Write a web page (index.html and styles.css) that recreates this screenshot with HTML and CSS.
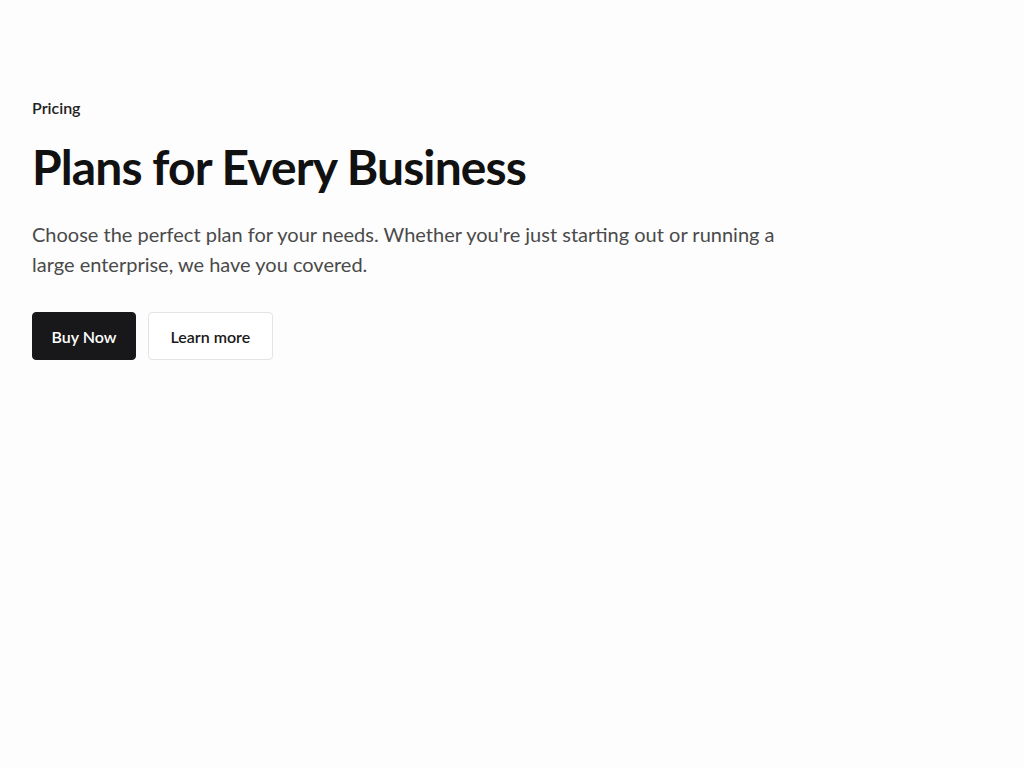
FILE: index.html
```html
<!DOCTYPE html>
<html lang="en">
<head>
    <meta charset="UTF-8">
    <meta name="viewport" content="width=device-width, initial-scale=1.0">
    <title>Pricing</title>
    <link rel="stylesheet" href="styles.css">
</head>
<body>

    <section class="hero">
        <p class="eyebrow">Pricing</p>
        <h1 class="title">Plans for Every Business</h1>
        <p class="lead">Choose the perfect plan for your needs. Whether you're just starting out or running a large enterprise, we have you covered.</p>
        <div class="actions">
            <button class="btn btn-dark">Buy Now</button>
            <button class="btn btn-light">Learn more</button>
        </div>
    </section>

</body>
</html>
```

FILE: styles.css
```css
body {
    margin: 0;
    background-color: #fdfdfd;
    color: #111111;
    font-family: Lato, "Noto Sans", sans-serif;
}
.hero {
    padding: 96px 32px;
}
.eyebrow {
    margin: 0;
    font-size: 16px;
    line-height: 24px;
    font-weight: 600;
    color: #222222;
}
.title {
    margin: 18px 0 0;
    font-size: 48px;
    line-height: 58px;
    font-weight: 700;
    letter-spacing: -0.9px;
    color: #111111;
}
.lead {
    margin: 23px 0 0;
    max-width: 768px;
    font-size: 20px;
    line-height: 30px;
    color: #4a4a4a;
}
.actions {
    display: flex;
    gap: 12px;
    margin-top: 33px;
}
.btn {
    height: 48px;
    border-radius: 4px;
    font-family: inherit;
    font-size: 16px;
    font-weight: 600;
    cursor: pointer;
}
.btn-dark {
    padding: 0 18.5px;
    background-color: #18181a;
    color: #ffffff;
    border: 1px solid #18181a;
}
.btn-light {
    padding: 0 21.5px;
    background-color: #ffffff;
    color: #1a1a1a;
    border: 1px solid #e4e4e4;
}
```
